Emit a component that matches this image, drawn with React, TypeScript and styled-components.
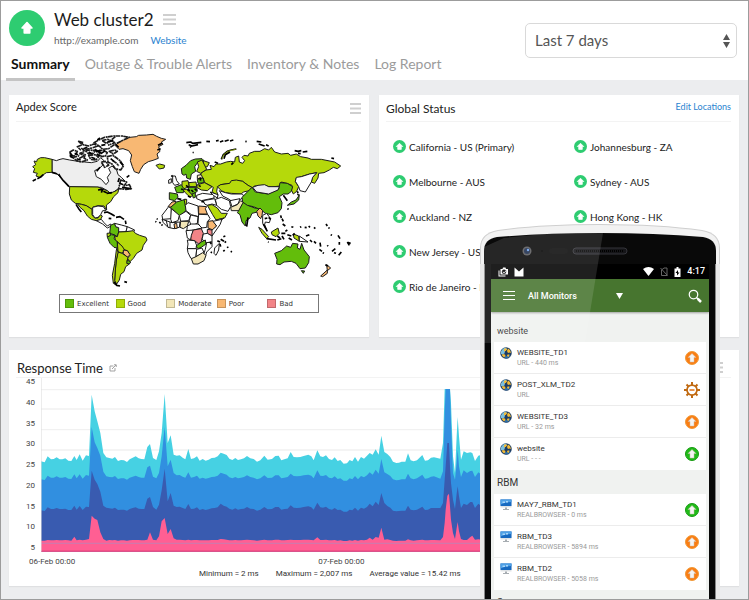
import React from "react";
import styled, { createGlobalStyle } from "styled-components";

const GlobalStyle = createGlobalStyle`
  *, *::before, *::after { box-sizing: border-box; }
  body { margin: 0; background: #ecedef; }
  button, select { font: inherit; color: inherit; }
  button { background: none; border: 0; padding: 0; cursor: pointer; }
  ul, h1, h2, h3, p { margin: 0; padding: 0; font-weight: 400; }
  ul { list-style: none; }
  svg { display: block; }
`;

/* ---------- page ---------- */

const Page = styled.div`
  position: relative;
  min-height: 100vh;
  overflow: hidden;
  border: 1px solid #9c9c9c;
  background: #ecedef;
  font-family: Lato, "Open Sans", sans-serif;
  color: #222;
`;

const Header = styled.header`
  height: 79px;
  padding: 9px 11px 0 5px;
  display: flex;
  justify-content: space-between;
  background: #fff;
`;

const Identity = styled.div`
  display: flex;
  flex-direction: column;
  justify-content: space-between;
`;

const TitleRow = styled.div`
  display: flex;
  gap: 9px;
  padding-left: 3px;
`;

const Title = styled.h1`
  display: flex;
  align-items: center;
  gap: 9px;
  font-size: 17px;
  line-height: 19px;
  color: #1c1c1c;
`;

const Meta = styled.p`
  display: flex;
  gap: 12px;
  margin-top: 4px;
  font-size: 10px;
  line-height: 14px;
  color: #666;
`;

const Link = styled.a<{ $small?: boolean }>`
  font-size: ${(p) => (p.$small ? "9px" : "10px")};
  color: #2b83d0;
  text-decoration: none;
`;

const Tabs = styled.nav`
  display: flex;
  gap: 5px;
  margin-bottom: -1px;
`;

const Tab = styled.a<{ $active?: boolean }>`
  padding: 0 5px 5px;
  font-size: 14px;
  line-height: 18px;
  white-space: nowrap;
  text-decoration: none;
  font-weight: ${(p) => (p.$active ? 700 : 400)};
  color: ${(p) => (p.$active ? "#111" : "#9b9b9b")};
  border-bottom: 3px solid ${(p) => (p.$active ? "#c4c4c4" : "transparent")};
`;

const PeriodField = styled.label`
  position: relative;
  width: 212px;
  height: 35px;
  margin-top: 13px;
  svg { position: absolute; right: 7px; top: 11px; pointer-events: none; }
`;

const PeriodSelect = styled.select`
  appearance: none;
  width: 100%;
  height: 100%;
  padding: 0 24px 2px 9px;
  border: 1px solid #d9d9d9;
  border-radius: 5px;
  background: #fff;
  font-size: 15px;
  color: #555;
`;

const Cards = styled.main`
  display: grid;
  grid-template-columns: 1fr 1fr;
  gap: 13px 10px;
  padding: 15px 9px 13px 8px;
`;

const Card = styled.section<{ $wide?: boolean }>`
  height: ${(p) => (p.$wide ? "236px" : "242px")};
  grid-column: ${(p) => (p.$wide ? "1 / -1" : "auto")};
  padding: 0 8px 0 7px;
  background: #fff;
  box-shadow: 0 1px 1px #dfe0e2;
`;

const CardHead = styled.div<{ $tall?: boolean }>`
  display: flex;
  justify-content: space-between;
  align-items: ${(p) => (p.$tall ? "center" : "flex-start")};
  height: ${(p) => (p.$tall ? "28px" : "27px")};
  padding: ${(p) => (p.$tall ? "8px 8px 0 1px" : "5px 0 0")};
  border-bottom: 1px solid #f3f3f3;
  font-size: 10px;
  line-height: 14px;
`;

const CardTitle = styled.h2<{ $size: number }>`
  display: flex;
  align-items: center;
  gap: 6px;
  font-size: ${(p) => p.$size}px;
  line-height: ${(p) => (p.$size === 12 ? 18 : 14)}px;
  color: #222;
`;

const IconButton = styled.button<{ $drop?: boolean }>`
  display: grid;
  place-items: center;
  padding-top: ${(p) => (p.$drop ? "3px" : "0")};
`;

const MenuBars = ({ width = 13, color = "#cfcfcf" }: { width?: number; color?: string }) => (
  <svg width={width} height="11" viewBox="0 0 13 11" preserveAspectRatio="none" fill={color}>
    <path d="M0 0h13v2H0zM0 4.500h13v2H0zM0 9h13v2H0z" />
  </svg>
);

/* ---------- world map ---------- */

const MapBox = styled.div`
  display: flex;
  flex-direction: column;
  padding: 8px 0 0 12px;
`;

const MapSvg = styled.svg`
  width: 327px;
  height: 164px;
`;

const Legend = styled.ul`
  display: flex;
  align-items: center;
  align-self: flex-start;
  width: 260px;
  height: 19px;
  margin: 0 0 0 31px;
  padding-left: 5px;
  border: 1px solid #777;
  font-family: "DejaVu Sans", sans-serif;
  font-size: 7px;
  color: #333;
`;

const LegendItem = styled.li`
  display: flex;
  align-items: center;
  gap: 3px;
  width: 51px;
  white-space: nowrap;
`;

const Swatch = styled.span<{ $color: string }>`
  flex: none;
  width: 9px;
  height: 9px;
  border: 1px solid rgba(0, 0, 0, 0.2);
  background: ${(p) => p.$color};
`;

const EXC = "#63bd0b";
const GOOD = "#b5d90b";
const MOD = "#f2e6b8";
const POOR = "#f8b873";
const BAD = "#f28487";
const NONE = "#ffffff";
const PALE = "#eeeeee";

const americas: [string, string][] = [
  [PALE, "M152 208L165 212 176 208 185 206 205 210 230 214 250 216 270 218 288 214 298 203 308 212 304 226 294 235 280 242 285 260 300 268 314 284 322 274 318 262 328 248 322 235 332 228 346 240 350 254 360 262 374 276 356 292 345 300 330 312 318 302 300 292 205 290 190 275 165 250 152 247Z"],
  [GOOD, "M152 208L130 203 118 203 108 208 106 215 98 213 103 224 94 230 100 236 96 247 108 250 104 258 115 262 125 255 135 248 152 247Z"],
  [POOR, "M341 166L352 158 365 150 385 142 405 140 412 136 435 135 455 133 466 139 480 145 493 148 480 156 485 163 472 170 476 184 467 192 471 205 455 211 441 215 427 224 418 238 413 250 399 245 393 230 387 212 391 195 382 182 365 176 353 178Z"],
  [GOOD, "M464 226L475 222 490 226 488 234 474 237Z"],
  [GOOD, "M205 290L290 291 303 297 318 302 326 310 345 302 352 296 350 308 337 320 328 335 315 345 316 360 308 348 290 347 275 351 272 358 255 347 240 343 222 340 210 330 204 312Z"],
  [GOOD, "M228 341L240 343 255 347 272 358 272 375 280 384 290 384 297 374 303 378 297 390 285 392 270 388 258 378 248 362 236 352Z"],
  [NONE, "M285 392L300 388 308 398 318 408 328 402 330 408 318 414 304 402Z"],
  [NONE, "M274 352L290 348 306 350 314 362 304 362 298 374 290 382 281 384 274 374Z"],
  [EXC, "M328 406L340 400 343 410 352 413 352 426 348 440 338 434 325 430Z"],
  [NONE, "M340 400L360 405 378 410 374 425 352 426 352 413 343 410Z"],
  [NONE, "M378 410L400 420 396 426 374 425Z"],
  [GOOD, "M317 430L328 429 326 440 318 441Z"],
  [EXC, "M318 442L330 434 341 436 338 446 348 455 348 474 338 472 326 460Z"],
  [GOOD, "M352 426L374 425 396 422 402 430 415 436 434 442 437 450 426 466 422 480 406 490 396 505 386 515 378 505 386 496 378 482 365 478 352 458 342 450 340 438 348 440Z"],
  [GOOD, "M348 456L362 468 370 480 362 490 350 485Z"],
  [POOR, "M366 480L378 482 386 494 378 502 366 490Z"],
  [GOOD, "M350 486L362 490 380 502 377 514 384 522 373 530 368 545 358 553 354 570 346 582 340 572 342 540 345 510Z"],
  [EXC, "M378 510L388 516 384 522 376 520Z"],
  [GOOD, "M347 474L350 488 345 510 342 540 340 572 346 586 336 580 333 556 340 520 345 480Z"],
];

const arctic = [
  "M206 186L216 180 228 184 222 196 208 200Z", "M214 202L232 198 240 190 252 194 248 204 258 210 240 216 226 212Z",
  "M228 170L244 164 262 168 278 162 290 168 272 174 254 178 238 180Z", "M252 182L266 180 282 182 276 190 262 192Z",
  "M278 158L292 150 310 142 336 138 362 138 384 142 366 150 350 158 336 166 322 176 304 178 296 170Z",
  "M302 152L318 148 330 152 316 160Z", "M290 184L306 180 318 188 312 198 300 200Z", "M262 196L280 194 292 200 284 210 268 208Z",
  "M318 200L334 196 346 204 358 214 366 228 358 240 342 236 332 222 320 216Z", "M300 216L314 214 322 226 310 232Z",
  "M324 184L340 180 348 184 336 192Z", "M232 154L246 158 240 162Z", "M358 270L376 276 368 288 384 284 390 296 374 298 352 296Z",
  "M334 212L346 220 352 228", "M342 140L330 150 340 158 320 166", "M240 174L250 184 236 190 248 198 232 206",
];

const inkAmericas =
  "M94 273L104 268M108 266L118 261 126 254M152 247L168 252M172 252L178 262 186 272 194 280 203 290M224 343L232 356 240 366" +
  "M308 368L318 366 330 372 340 378M344 382L356 380 368 388M322 385L330 386M372 392L374 402M338 576L346 586 356 588M369 575L377 577" +
  "M290 300L304 298 300 308M306 304L316 308M316 310L332 308M355 280L366 284M362 292L388 296M206 188L214 198M280 178L300 190 312 182M284 186L298 180" +
  "M296 232L286 244M466 386L469 388M462 394L465 396M474 396L478 400M480 404L484 406M354 264L350 276M356 216L366 226M376 262L384 256" +
  "M246 176L258 172M220 190L230 194M262 186L272 192M286 192L296 198M270 202L282 206M300 166L312 164M318 156L336 152M328 206L338 214M226 206L238 210M296 144L288 150M206 196L214 204M344 164L352 172M470 166L482 160M468 180L478 176";

const oldWorld: [string, string][] = [
  [GOOD, "M66 212L84 218 78 230 70 232 74 240 90 238 86 226 98 230 104 222 118 222 135 216 148 214 160 216 162 202 172 198 174 216 184 220 190 212 182 202 188 196 200 198 204 190 220 184 236 184 250 176 262 180 270 172 280 186 300 192 320 190 328 196 345 192 358 200 380 204 390 208 420 208 440 212 460 216 478 228 468 236 456 232 444 240 428 248 412 250 410 264 400 280 390 276 394 262 406 248 385 252 372 256 360 260 345 264 342 274 352 290 346 304 336 312 330 300 332 286 316 280 300 276 296 288 270 291 244 286 220 288 212 294 200 286 184 274 166 272 145 280 118 284 108 292 106 304 110 316 92 306 96 292 70 278 66 266 56 256 62 246 74 240 66 226Z"],
  [NONE, "M345 262L360 260 385 252 406 248 394 262 390 276 372 306 356 302 352 290 342 274Z"],
  [EXC, "M2 252L0 236 14 226 28 212 42 207 62 206 68 212 50 216 40 230 43 244 30 252 27 268 16 264 14 252 8 256Z"],
  [GOOD, "M48 216L62 210 68 222 76 238 58 250 46 244 52 230Z"],
  [NONE, "M-26 258L-18 258 -14 272 -6 282 -20 286 -26 278Z"],
  [NONE, "M-38 270L-30 266 -30 278 -38 280Z"],
  [EXC, "M-36 308L-12 312 -10 322 -20 332 -36 328Z"],
  [EXC, "M-20 292L0 284 10 294 6 308 -14 308Z"],
  [GOOD, "M2 274L20 272 24 290 8 296 2 288Z"],
  [GOOD, "M22 278L44 276 46 290 24 290Z"],
  [MOD, "M48 256L60 254 64 264 48 266Z"],
  [EXC, "M48 268L66 264 68 278 50 280Z"],
  [GOOD, "M48 284L70 278 92 290 78 302 60 300 46 292Z"],
  [EXC, "M22 292L46 292 48 304 32 314 20 302Z"],
  [GOOD, "M4 298L16 298 34 316 26 322 12 308Z"],
  [EXC, "M32 312L42 308 42 322 36 324Z"],
  [NONE, "M46 316L64 310 98 314 98 324 60 332 46 326Z"],
  [NONE, "M86 306L110 314 108 324 96 316Z"],
  [GOOD, "M108 290L118 284 145 280 150 272 165 270 184 274 200 286 212 292 204 302 186 306 180 312 150 310 132 308 120 302Z"],
  [NONE, "M114 302L132 308 150 312 180 312 190 318 178 328 158 338 140 326 124 318Z"],
  [NONE, "M102 328L120 322 144 332 148 350 140 364 120 358 106 346Z"],
  [NONE, "M146 332L176 326 170 342 152 350Z"],
  [MOD, "M148 352L168 344 178 332 186 338 174 362 150 362Z"],
  [NONE, "M66 332L100 326 106 346 92 342 78 346 70 342Z"],
  [GOOD, "M78 346L92 344 108 354 120 370 138 370 130 384 104 390 94 374Z"],
  [NONE, "M104 390L128 384 112 396Z"],
  [EXC, "M172 362L184 340 192 334 200 346 220 354 236 354 228 366 212 370 206 384 194 392 192 408 182 396 176 374 168 368Z"],
  [EXC, "M182 322L200 304 212 292 222 306 260 312 292 298 294 288 296 278 318 280 334 290 330 304 320 312 306 312 294 320 302 338 300 356 290 368 270 374 252 370 240 360 216 350 198 346 184 336Z"],
  [PALE, "M214 292L230 286 250 284 262 290 294 290 290 300 262 312 226 306Z"],
  [POOR, "M226 364L236 354 244 362 242 376 238 386 230 378Z"],
  [NONE, "M244 376L256 370 268 386 264 398 252 396 250 404 256 420 244 400Z"],
  [GOOD, "M232 412L242 418 262 440 256 446 242 430Z"],
  [GOOD, "M270 426L290 414 294 430 284 440 272 434Z"],
  [GOOD, "M336 432L352 438 354 454 338 444Z"],
  [NONE, "M354 438L380 456 354 454Z"],
  [EXC, "M318 346L330 336 344 330 352 318 348 312 354 314 352 330 338 342Z"],
  [EXC, "M280 490L300 482 316 468 328 472 334 460 350 462 348 474 356 478 361 460 368 480 384 500 382 518 372 534 356 536 344 520 330 514 308 516 296 524 286 522 287 508Z"],
  [EXC, "M360 542L370 543 366 550Z"],
  [POOR, "M436 524L448 534 438 542Z"],
  [POOR, "M418 558L438 540 438 550 424 560Z"],
  [POOR, "M-40 350L-28 336 -16 334 -18 344 -34 352Z"],
  [NONE, "M-58 376L-38 350 -30 356 -30 386 -56 388Z"],
  [EXC, "M-32 352L-14 336 12 328 12 346 14 362 -6 378Z"],
  [GOOD, "M8 328L16 328 16 342 12 346Z"],
  [NONE, "M-30 356L-6 376 -10 392 -28 398 -32 388Z"],
  [NONE, "M12 346L20 338 50 348 52 380 30 374 14 362Z"],
  [POOR, "M52 348L76 350 72 356 78 372 52 372Z"],
  [NONE, "M-6 376L14 364 28 376 22 392 -2 394Z"],
  [NONE, "M28 375L50 380 48 400 30 408 24 392Z"],
  [NONE, "M52 373L80 374 86 386 78 395 76 412 60 414 50 400Z"],
  [NONE, "M-58 388L-28 398 -4 396 -6 412 -22 416 -40 412 -54 398Z"],
  [NONE, "M-46 390L-40 412M-34 396L-34 414"],
  [POOR, "M-22 402L-14 400 -12 414 -20 416Z"],
  [MOD, "M-2 394L22 394 18 408 6 416 -4 412Z"],
  [NONE, "M18 408L30 402 50 402 62 414 36 420 16 426Z"],
  [POOR, "M80 394L95 392 106 408 95 420 80 414Z"],
  [NONE, "M95 394L122 388 116 404 92 438 90 422 106 408Z"],
  [BAD, "M78 418L92 420 92 438 78 430Z"],
  [NONE, "M14 422L36 420 28 450 18 444Z"],
  [BAD, "M36 420L60 416 66 430 60 455 52 462 40 452 28 450 30 436Z"],
  [NONE, "M66 432L78 430 92 438 92 456 76 458 62 448Z"],
  [NONE, "M18 450L40 452 46 466 44 476 18 476 20 462Z"],
  [EXC, "M44 468L60 456 72 450 74 462 60 472 50 476Z"],
  [NONE, "M76 458L92 456 92 470 76 486 72 500 66 496 72 478Z"],
  [NONE, "M18 476L46 476 44 500 36 508 28 504 20 488Z"],
  [NONE, "M46 478L62 474 68 488 44 500Z"],
  [MOD, "M30 506L44 500 64 488 74 496 68 512 50 522 36 522Z"],
  [NONE, "M100 474L114 460 112 480 104 496 98 490Z"],
];

const inkOldWorld =
  "M15 158L28 156 34 160 60 157M22 164L32 168 50 164M26 172L30 168M34 187L37 188M75 154L86 155M104 153L112 151M116 156L126 152M130 154L142 150M146 153L156 150" +
  "M192 154L196 155M226 154L240 156M232 162L250 168M254 164L262 168M120 208L126 194 138 184 150 180 165 177M128 206L132 194 146 186" +
  "M340 182L350 184 360 182M364 186L378 184M350 190L358 191M450 204L458 206M200 382L196 410M298 376L300 384M302 386L306 394M304 402L312 408M256 446L284 450M288 450L300 446" +
  "M300 430L312 430M302 438L308 448M318 434L330 438M322 444L332 450M334 436L340 430M246 402L258 424M306 316L318 332M318 356L322 358M348 304L350 310M260 456L262 457" +
  "M312 424L318 420M374 438L384 434M386 450L392 456M398 454L404 460M330 410L336 412M356 412L360 410M370 412L376 413M382 408L386 412M398 412L402 416M434 402L438 408M442 412L444 416" +
  "M416 458L418 470M414 478L422 484M424 488L428 490M438 466L440 469M448 434L452 436M470 436L476 446M474 456L474 464M452 484L462 476M458 488L464 490M480 486L472 496M498 456L504 466M500 458L508 460" +
  "M432 524L440 528M126 440L132 438M118 448L128 454M108 452L116 456M130 458L134 454M116 462L118 470M126 484L130 480M138 470L140 474M148 484L152 486M88 486L92 488M86 456L90 462" +
  "M52 286L58 290M30 300L36 306M40 296L46 302M20 318L28 322M56 262L58 272M0 296L4 300M14 286L22 292M-12 326L0 328M-30 260L-26 256M60 334L68 336M18 298L26 302M150 224L156 218M100 216L110 220M288 438L296 444M262 382L268 388M250 386L258 384";

const WorldMap = () => (
  <MapSvg viewBox="80 120 981 492" role="img" aria-label="Apdex score by country">
    <g stroke="#1c1c1c" strokeWidth="3" strokeLinejoin="round">
      {americas.map(([fill, d], i) => (
        <path key={i} fill={fill} d={d} />
      ))}
      {arctic.map((d, i) => (
        <path key={i} fill="#fff" d={d} strokeWidth="5" strokeDasharray="14 2 6 1" />
      ))}
      <path d={inkAmericas} fill="none" stroke="#000" strokeWidth="5" />
      <g transform="translate(540 0)">
        {oldWorld.map(([fill, d], i) => (
          <path key={i} fill={fill} d={d} />
        ))}
        <path d={inkOldWorld} fill="none" stroke="#000" strokeWidth="5" />
        <path d="M122 206L128 193 140 184 163 178" fill="none" stroke={GOOD} strokeWidth="2" />
      </g>
    </g>
  </MapSvg>
);

/* ---------- locations ---------- */

const Locations = styled.div`
  display: grid;
  grid-template-columns: 15fr 13fr;
  padding: 7px 0 0 7px;
`;

const Location = styled.li`
  display: flex;
  align-items: center;
  gap: 3px;
  height: 35px;
  font-size: 10px;
  line-height: 14px;
  white-space: nowrap;
`;

const UpBadge = ({ size, hole }: { size: number; hole?: boolean }) => (
  <svg width={size} height={size} viewBox="0 0 36 36" aria-label="Up">
    <circle cx="18" cy="18" r="18" fill="#2ecc71" />
    {hole ? (
      <path d="M18 9l9 9h-4v8H13v-8H9z" fill="#fff" stroke="#fff" strokeWidth="2" strokeLinejoin="round" />
    ) : (
      <path d="M18 12.500l5 5.500h-2.200v5h-5.600v-5H13z" fill="#fff" stroke="#fff" strokeWidth="1.500" strokeLinejoin="round" />
    )}
  </svg>
);

const westLocations = ["California - US (Primary)", "Melbourne - AUS", "Auckland - NZ", "New Jersey - US", "Rio de Janeiro - BR"];
const eastLocations = ["Johannesburg - ZA", "Sydney - AUS", "Hong Kong - HK"];

const LocationList = ({ names }: { names: string[] }) => (
  <ul>
    {names.map((n) => (
      <Location key={n}>
        <UpBadge size={13} hole />
        {n}
      </Location>
    ))}
  </ul>
);

/* ---------- response time chart ---------- */

const ChartRow = styled.div`
  display: flex;
  gap: 6px;
  height: 174px;
  padding-right: 7px;
  font-family: Roboto, sans-serif;
  font-size: 8px;
  line-height: 8px;
  color: #444;
`;

const Axis = styled.ul`
  display: flex;
  flex-direction: column;
  justify-content: space-between;
  width: 19px;
  height: 174px;
  text-align: right;
`;

const Plot = styled.svg`
  flex: 1;
  min-width: 0;
  height: 174px;
`;

const TimeLabels = styled.div`
  display: flex;
  gap: 243px;
  padding: 4px 0 0 13px;
  font-family: Roboto, sans-serif;
  font-size: 8px;
  line-height: 12px;
  color: #444;
`;

const Stats = styled.div`
  display: flex;
  gap: 17px;
  padding-left: 183px;
  font-family: Roboto, sans-serif;
  font-size: 8px;
  line-height: 12px;
  color: #333;
`;

/* x, then the top edge of each band; bands left out follow the first one */
const samples: number[][] = [
  [122, 365], [133, 368], [142, 350], [152, 359], [160, 358], [169, 353], [178, 359], [186, 359], [195, 356], [204, 363], [213, 364],
  [222, 349, 404, 498, 591], [229, 361], [238, 344], [247, 363], [257, 347], [266, 349, 408, 502, 598], [274, 165, 262, 393, 528], [283, 215, 308, 420, 537],
  [291, 245, 325, 433, 541], [300, 280, 348, 456, 578], [309, 340, 396, 498, 598], [318, 353, 410, 504, 603], [327, 355], [336, 357], [344, 352], [353, 364],
  [362, 361], [371, 362], [380, 367], [388, 359], [397, 354], [406, 350], [415, 356], [423, 358], [432, 359], [441, 322, 383, 477, 600],
  [449, 313, 378, 472, 578], [458, 355, 411, 502, 600], [468, 361], [476, 335, 400, 495, 590], [484, 280, 350, 452, 545], [493, 163, 262, 387, 535],
  [502, 310, 380, 485, 583], [511, 287, 360, 460, 568], [520, 345, 400, 498, 596], [529, 348], [538, 347], [547, 354], [555, 359], [564, 328, 398, 493, 600],
  [572, 358], [581, 356], [590, 350], [598, 363], [607, 358], [616, 363], [625, 360], [634, 355], [643, 354], [652, 350], [661, 339, 399, 492, 598],
  [670, 342], [679, 346], [687, 357], [696, 361], [705, 355], [713, 361], [722, 359], [731, 356], [740, 349], [750, 356], [760, 358], [770, 366],
  [780, 362], [792, 348], [802, 360], [815, 358], [825, 349], [835, 348], [843, 362], [852, 359], [862, 356], [871, 337, 402, 497, 600], [880, 352],
  [890, 353], [900, 352], [910, 349], [924, 345], [933, 350], [940, 362], [951, 332, 392, 489, 593], [960, 350], [968, 352], [977, 347], [986, 358],
  [995, 361], [1003, 353], [1012, 364], [1020, 361], [1030, 372], [1040, 371], [1048, 361], [1056, 365], [1064, 352], [1073, 366], [1082, 352],
  [1091, 357], [1100, 348], [1108, 340, 398, 492, 594], [1117, 345], [1126, 329, 390, 486, 592], [1135, 345, 402, 496, 594], [1143, 288, 358, 460, 564],
  [1152, 337, 398, 490, 600], [1161, 343], [1170, 352], [1178, 366], [1188, 370], [1196, 369], [1204, 366], [1215, 366], [1223, 341], [1231, 362],
  [1240, 365], [1250, 362], [1266, 346], [1274, 363], [1283, 362], [1292, 354], [1301, 353], [1320, 357, 417, 505, 602], [1328, 310, 395, 490, 592],
  [1333, 148, 220, 420, 550], [1336, 148, 148, 380, 510], [1341, 148, 148, 310, 468], [1346, 148, 148, 310, 462], [1349, 148, 148, 380, 500],
  [1352, 190, 250, 430, 540], [1358, 350, 400, 480, 580], [1364, 400, 420, 508, 598], [1369, 290, 370, 462, 565], [1372, 232, 330, 440, 547],
  [1376, 290, 380, 470, 575], [1382, 360, 412, 505, 598], [1390, 335, 392, 492, 601], [1400, 340, 400, 496, 601], [1410, 338, 394, 487, 592],
  [1416, 340, 393, 487, 588], [1424, 364, 412, 505, 600], [1434, 348, 398, 492, 599], [1444, 345], [1470, 360], [1520, 352], [1580, 362], [1640, 355],
  [1700, 364], [1780, 352], [1860, 360], [1940, 358],
];

const bands = [
  { color: "#46d1e3", base: 360, follow: 1 },
  { color: "#318fe0", base: 415, follow: 0.7 },
  { color: "#395bb0", base: 509, follow: 0.6 },
  { color: "#ff5f93", base: 602, follow: 0.15 },
];

const bandPath = (index: number) => {
  const { base, follow } = bands[index];
  const top = samples.map((s) => `${s[0]} ${Math.round(s[index + 1] ?? base + (s[1] - 360) * follow)}`);
  return `M122 636L${top.join(" ")} 1940 636Z`;
};

const ResponsePlot = () => (
  <Plot role="img" aria-label="Response time by hour">
    <g transform="scale(0.33333) translate(-122 -115)">
      <path d="M122 150H1940M122 208H1940M122 270H1940M122 331H1940" stroke="#f1f1f1" strokeWidth="4" />
      {bands.map((b, i) => (
        <path key={b.color} d={bandPath(i)} fill={b.color} />
      ))}
      <path d="M122 611H1940" stroke="#d277ab" strokeWidth="4" />
      <path d="M122 634H1940" stroke="#e5447c" strokeWidth="3" />
      <path d="M123 115V636" stroke="#dcdcdc" strokeWidth="2" />
    </g>
  </Plot>
);

const PopOut = () => (
  <svg width="8" height="8" viewBox="0 0 16 16" fill="none" stroke="#999" strokeWidth="1.800">
    <path d="M9 4H2v10h10V8M6 10l8-8M10 1.500h4.500V6" />
  </svg>
);

/* ---------- phone ---------- */

const Phone = styled.aside`
  position: absolute;
  top: 223px;
  right: 28px;
  bottom: 0;
  width: 240px;
  overflow: hidden;
  display: flex;
  flex-direction: column;
  font-family: Roboto, sans-serif;
`;

const Gloss = styled.div`
  position: absolute;
  inset: 9px 0 auto 4px;
  height: 110px;
  background: rgba(255, 255, 255, 0.12);
  clip-path: polygon(0 14px, 20px 5px, 60px 1px, 119px 0, 101px 110px, 0 110px);
  pointer-events: none;
`;

const Casing = styled.div`
  flex: 1;
  min-height: 0;
  padding: 0 7px;
  border: solid #e9e9e9;
  border-width: 0 4px;
  background: #090909;
  box-shadow: inset 1px 0 #888, inset -1px 0 #888;
`;

const Screen = styled.div`
  height: 100%;
  overflow: hidden;
  background: #f0f2f0;
`;

const StatusBar = styled.div`
  display: flex;
  align-items: center;
  gap: 6px;
  height: 15px;
  padding: 0 4px 0 7px;
  background: #000;
  color: #fff;
  font-size: 9px;
  font-weight: 500;
  line-height: 15px;
`;

const Spacer = styled.span`
  flex: 1;
`;

const AppBar = styled.div`
  display: flex;
  align-items: center;
  height: 33px;
  padding: 0 7px 0 12px;
  background: #47752f;
  color: #fff;
  box-shadow: 0 1px 2px rgba(0, 0, 0, 0.35);
`;

const Picker = styled.button`
  display: flex;
  align-items: center;
  gap: 39px;
  margin-left: 13px;
  font-size: 9px;
  font-weight: 500;
`;

const GroupTitle = styled.h3<{ $first?: boolean }>`
  height: ${(p) => (p.$first ? "30px" : "24px")};
  padding: ${(p) => (p.$first ? "10px 0 0 6px" : "4px 0 0 6px")};
  font-size: ${(p) => (p.$first ? "9px" : "10px")};
  line-height: 18px;
  color: #333;
`;

const Group = styled.ul`
  margin: 0 3px;
  background: #fff;
`;

const Monitor = styled.li`
  display: flex;
  align-items: flex-start;
  gap: 5px;
  height: 32px;
  padding: 5px 7px 0 6px;
  border-bottom: 1px solid #ececec;
  &:last-child { border-bottom: 0; }
`;

const MonitorText = styled.div`
  flex: 1;
  font-size: 8px;
  line-height: 11px;
  color: #333;
`;

const MonitorMeta = styled.p`
  font-size: 7px;
  line-height: 10px;
  color: #9a9a9a;
`;

const StatusIcon = styled.span`
  display: grid;
  place-items: center;
  width: 16px;
  height: 16px;
  margin: 3px -1px 0 0;
`;

const Globe = () => (
  <svg width="12" height="12" viewBox="0 0 24 24">
    <circle cx="12" cy="12" r="11.500" fill="#1d3c63" />
    <path d="M2 9Q5 2 12 1l2 4-4 3-1 5-4 2-3-1z" fill="#7cc0dd" />
    <path d="M7 17l6 1 5-3 3 2Q17 23 11 23z" fill="#2d6ca4" />
    <path d="M8 4l4-2 2 3-3 3-3 1zM16 3l4 3 2 6-3-1-3 1-2-4zM5 14l5 1 1 3-3 3-4-4zM15 15l4 0-2 5-3-2z" fill="#f3ba35" />
  </svg>
);

const Desktop = () => (
  <svg width="12" height="12" viewBox="0 0 24 24">
    <path d="M1 1h22v16H1z" fill="#dfe3e6" />
    <path d="M1 1h22v13H1z" fill="#1769c0" />
    <path d="M1 1h22v5Q12 6 1 11z" fill="#4ea0e6" />
    <path d="M5 5h5v3H5zM12 4h4v3h-4z" fill="#a8d5f7" />
    <path d="M10 17h4v3h4v2H6v-2h4z" fill="#a7adb2" />
  </svg>
);

const ArrowStatus = ({ color, edge }: { color: string; edge: string }) => (
  <svg width="14" height="14" viewBox="0 0 28 28">
    <circle cx="14" cy="14" r="13" fill={color} stroke={edge} strokeWidth="2" />
    <path d="M14 5l8 8h-4v9h-8v-9H6z" fill="#f4f4f4" stroke="#cbb9a5" />
  </svg>
);

const GearStatus = () => (
  <svg width="16" height="16" viewBox="0 0 32 32">
    <g stroke="#c06a12" strokeWidth="4">
      <path d="M16 0v32M0 16h32M5 5l22 22M27 5L5 27" />
    </g>
    <circle cx="16" cy="16" r="10" fill="#fff" stroke="#c06a12" strokeWidth="3.500" />
    <path d="M11 16h10" stroke="#e06f10" strokeWidth="3" />
  </svg>
);

type Status = "trouble" | "up" | "config";

const statusIcons: Record<Status, React.ReactNode> = {
  trouble: <ArrowStatus color="#fa7d12" edge="#f09a3a" />,
  up: <ArrowStatus color="#20bb18" edge="#179a12" />,
  config: <GearStatus />,
};

const websites: [string, string, Status][] = [
  ["WEBSITE_TD1", "URL - 440 ms", "trouble"],
  ["POST_XLM_TD2", "URL", "config"],
  ["WEBSITE_TD3", "URL - 32 ms", "trouble"],
  ["website", "URL - - -", "up"],
];

const browsers: [string, string, Status][] = [
  ["MAY7_RBM_TD1", "REALBROWSER - 0 ms", "up"],
  ["RBM_TD3", "REALBROWSER - 5894 ms", "trouble"],
  ["RBM_TD2", "REALBROWSER - 5058 ms", "trouble"],
];

const Monitors = ({ items, icon }: { items: [string, string, Status][]; icon: React.ReactNode }) => (
  <Group>
    {items.map(([name, meta, status]) => (
      <Monitor key={name}>
        {icon}
        <MonitorText>
          {name}
          <MonitorMeta>{meta}</MonitorMeta>
        </MonitorText>
        <StatusIcon>{statusIcons[status]}</StatusIcon>
      </Monitor>
    ))}
  </Group>
);

const Bezel = () => (
  <svg width="240" height="40" viewBox="0 0 240 40">
    <path d="M0 40V24Q0 9 18 6Q60 0 120 0Q180 0 222 6Q240 9 240 24V40Z" fill="#cfcfcf" />
    <path d="M1 40V24Q1 10 18 7Q60 1 120 1Q180 1 222 7Q239 10 239 24V40Z" fill="#f2f2f2" />
    <path d="M4 40V27Q4 15 17 13Q65 9 120 9Q175 9 223 13Q236 15 236 27V40Z" fill="#090909" />
    <circle cx="47" cy="27" r="4.500" fill="#5a5a5d" />
    <circle cx="47" cy="27" r="3" fill="#1c2c4c" />
    <circle cx="48" cy="26" r="1.200" fill="#6ea3ee" />
    <circle cx="62" cy="27" r="1" fill="#000" />
    <rect x="69" y="24" width="19" height="6" rx="3" fill="#0c0c0c" />
    <rect x="93" y="24" width="54" height="6" rx="3" fill="#151518" stroke="#34343a" />
    <path d="M96 27h48" stroke="#000" strokeWidth="2" strokeDasharray="1 1" />
  </svg>
);

export default function App() {
  return (
    <Page>
      <GlobalStyle />
      <Header>
        <Identity>
          <TitleRow>
            <UpBadge size={36} />
            <div>
              <Title>
                Web cluster2
                <IconButton aria-label="Monitor menu">
                  <MenuBars />
                </IconButton>
              </Title>
              <Meta>
                http://example.com <Link href="#website">Website</Link>
              </Meta>
            </div>
          </TitleRow>
          <Tabs>
            <Tab href="#summary" $active>Summary</Tab>
            <Tab href="#outages">Outage &amp; Trouble Alerts</Tab>
            <Tab href="#inventory">Inventory &amp; Notes</Tab>
            <Tab href="#log">Log Report</Tab>
          </Tabs>
        </Identity>
        <PeriodField>
          <PeriodSelect aria-label="Period" defaultValue="7">
            <option value="7">Last 7 days</option>
            <option value="30">Last 30 days</option>
          </PeriodSelect>
          <svg width="7" height="14" viewBox="0 0 7 14" fill="#555">
            <path d="M3.500 0L7 6H0zM0 8h7l-3.500 6z" />
          </svg>
        </PeriodField>
      </Header>

      <Cards>
        <Card>
          <CardHead>
            <CardTitle $size={11}>Apdex Score</CardTitle>
            <IconButton aria-label="Apdex menu" $drop>
              <MenuBars width={11} />
            </IconButton>
          </CardHead>
          <MapBox>
            <WorldMap />
            <Legend>
              <LegendItem><Swatch $color={EXC} />Excellent</LegendItem>
              <LegendItem><Swatch $color={GOOD} />Good</LegendItem>
              <LegendItem><Swatch $color={MOD} />Moderate</LegendItem>
              <LegendItem><Swatch $color={POOR} />Poor</LegendItem>
              <LegendItem><Swatch $color={BAD} />Bad</LegendItem>
            </Legend>
          </MapBox>
        </Card>

        <Card>
          <CardHead>
            <CardTitle $size={12}>Global Status</CardTitle>
            <Link href="#locations" $small>Edit Locations</Link>
          </CardHead>
          <Locations>
            <LocationList names={westLocations} />
            <LocationList names={eastLocations} />
          </Locations>
        </Card>

        <Card $wide>
          <CardHead $tall>
            <CardTitle $size={13}>
              Response Time
              <PopOut />
            </CardTitle>
            <IconButton aria-label="Response time menu">
              <MenuBars width={11} />
            </IconButton>
          </CardHead>
          <ChartRow>
            <Axis>
              {[45, 40, 35, 30, 25, 20, 15, 10, 5].map((v) => (
                <li key={v}>{v}</li>
              ))}
            </Axis>
            <ResponsePlot />
          </ChartRow>
          <TimeLabels>
            <span>06-Feb 00:00</span>
            <span>07-Feb 00:00</span>
          </TimeLabels>
          <Stats>
            <span>Minimum = 2 ms</span>
            <span>Maximum = 2,007 ms</span>
            <span>Average value = 15.42 ms</span>
          </Stats>
        </Card>
      </Cards>

      <Phone>
        <Bezel />
        <Casing>
          <Screen>
            <StatusBar>
              <svg width="10" height="10" viewBox="0 0 20 20" fill="#fff">
                <path d="M1 7v12h14v-2H3V7z" />
                <path fillRule="evenodd" d="M5 4h4l1-3h5l1 3h4v11H5zM12 5a4.500 4.500 0 1 0 .1 0zM10 9l2 2 4-4 1 1-5 5-3-3z" />
              </svg>
              <svg width="10" height="10" viewBox="0 0 20 20" fill="#fff">
                <path d="M1 1l9 8 9-8v18H1z" />
              </svg>
              <Spacer />
              <svg width="11" height="9" viewBox="0 0 22 18" fill="#fff">
                <path d="M0 4Q11-4 22 4L11 18z" />
              </svg>
              <svg width="8" height="9" viewBox="0 0 16 18" fill="none" stroke="#666" strokeWidth="2">
                <path d="M3 6v11h11V2H8zM1 2l14 15" />
              </svg>
              <svg width="7" height="10" viewBox="0 0 14 20">
                <path d="M1 3h4V0h4v3h4v17H1z" fill="#fff" />
                <path d="M8 6l-5 6h3v5l5-6H8z" fill="#000" />
              </svg>
              4:17
            </StatusBar>
            <AppBar>
              <IconButton aria-label="Navigation">
                <svg width="12" height="9" viewBox="0 0 12 9" fill="#fff">
                  <path d="M0 0h12v1H0zM0 4h12v1H0zM0 8h12v1H0z" />
                </svg>
              </IconButton>
              <Picker>
                All Monitors
                <svg width="7" height="6" viewBox="0 0 7 6" fill="#fff">
                  <path d="M0 0h7L3.500 6z" />
                </svg>
              </Picker>
              <Spacer />
              <IconButton aria-label="Search">
                <svg width="14" height="14" viewBox="0 0 28 28" fill="none" stroke="#fff">
                  <circle cx="11" cy="11" r="8.500" strokeWidth="2.500" />
                  <path d="M17 17l3 3" strokeWidth="3" />
                  <path d="M19.500 19.500l6.500 6.500" strokeWidth="5" />
                </svg>
              </IconButton>
            </AppBar>
            <GroupTitle $first>website</GroupTitle>
            <Monitors items={websites} icon={<Globe />} />
            <GroupTitle>RBM</GroupTitle>
            <Monitors items={browsers} icon={<Desktop />} />
            <GroupTitle>Servers</GroupTitle>
          </Screen>
        </Casing>
        <Gloss />
      </Phone>
    </Page>
  );
}
